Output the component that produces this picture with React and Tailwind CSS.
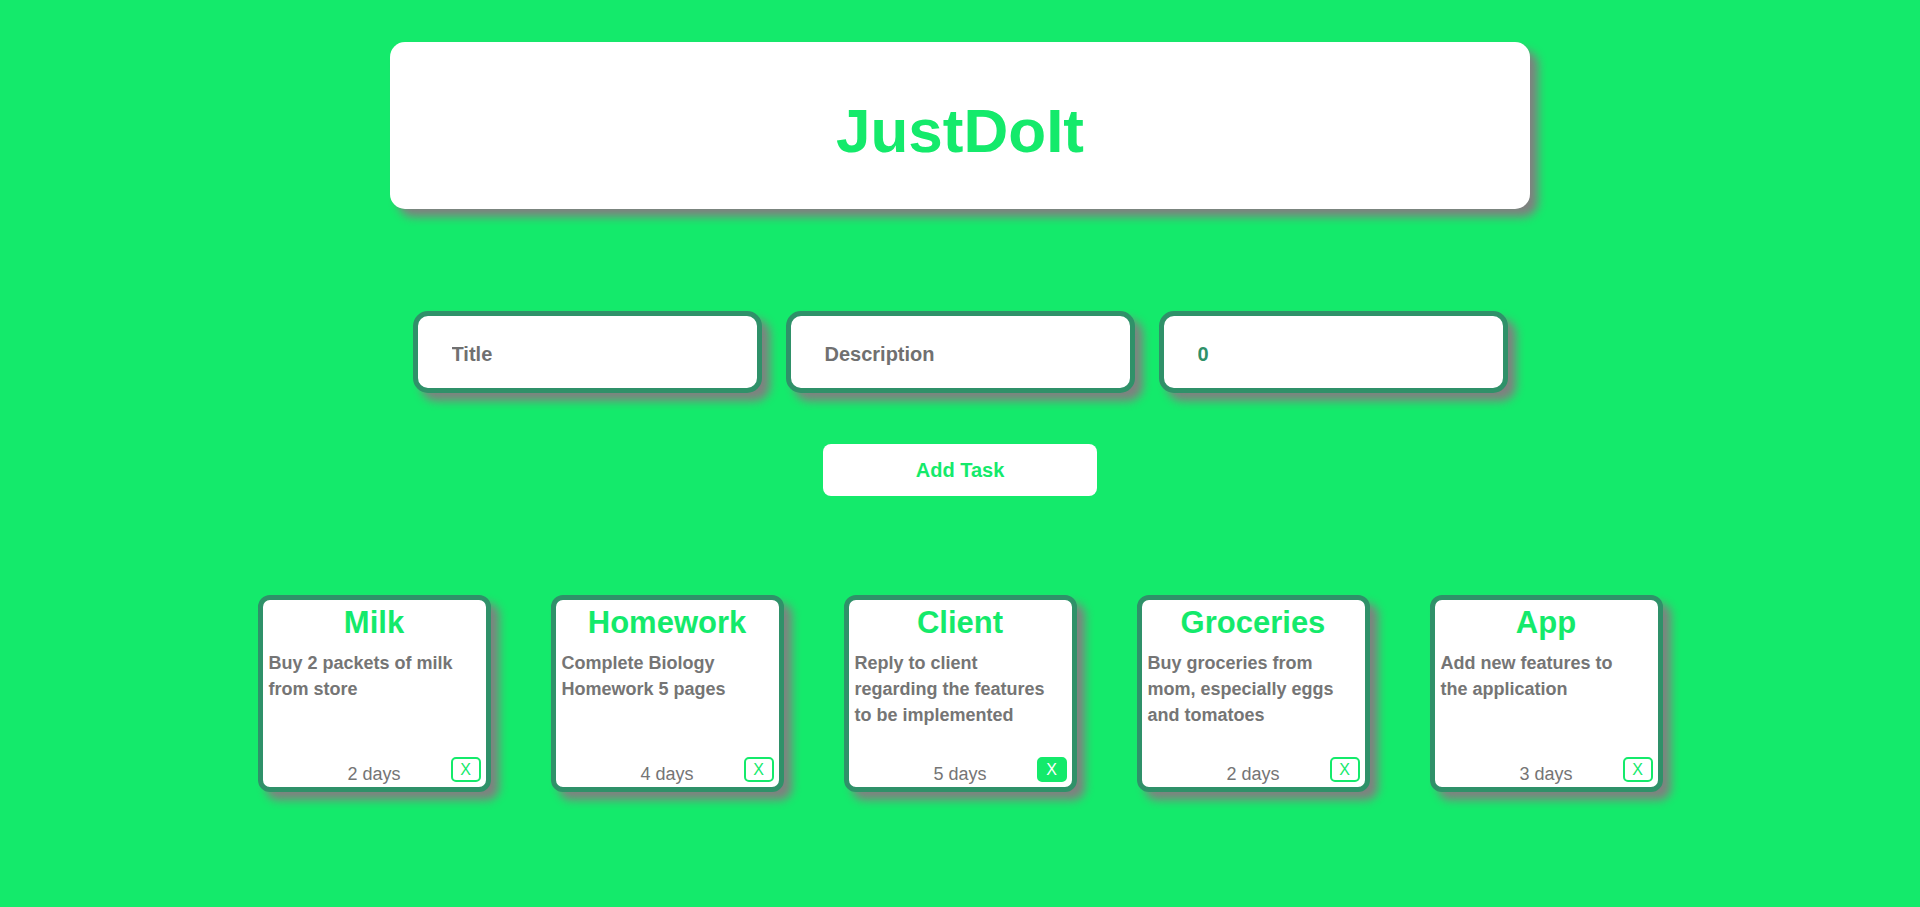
const tasks = [
  { title: "Milk", desc: "Buy 2 packets of milk from store", days: 2 },
  { title: "Homework", desc: "Complete Biology Homework 5 pages", days: 4 },
  { title: "Client", desc: "Reply to client regarding the features to be implemented", days: 5, hover: true },
  { title: "Groceries", desc: "Buy groceries from mom, especially eggs and tomatoes", days: 2 },
  { title: "App", desc: "Add new features to the application", days: 3 },
];

function TaskCard({ task }) {
  return (
    <div className="w-[233px] h-[197px] flex flex-col rounded-[12px] border-[5px] border-[#2f9169] bg-white shadow-[8px_8px_10px_#808080]">
      <h2 className="text-center text-[31px] leading-[46px] font-bold text-[#14ea6b]">{task.title}</h2>
      <p className="mt-[4px] flex-1 pl-[6px] pr-[19px] text-[18px] leading-[26px] font-bold text-[#757575]">{task.desc}</p>
      <div className="relative h-[24px] text-center text-[18px] leading-[22px] text-[#757575]">
        {task.days} days
        <button
          className={
            task.hover
              ? "absolute right-[5px] bottom-[5px] w-[30px] h-[25px] rounded-[5px] border-2 border-[#14ea6b] bg-[#14ea6b] text-[16px] leading-[20px] text-white"
              : "absolute right-[5px] bottom-[5px] w-[30px] h-[25px] rounded-[5px] border-2 border-[#14ea6b] bg-white text-[16px] leading-[20px] text-[#14ea6b]"
          }
        >
          X
        </button>
      </div>
    </div>
  );
}

export default function App() {
  return (
    <div className="min-h-screen bg-[#14ea6b] pt-[42px] font-['Comic_Sans_MS','Liberation_Sans',sans-serif]">
      <header className="mx-auto flex h-[167px] w-[1140px] items-center justify-center rounded-[15px] bg-white pt-[10px] shadow-[8px_8px_10px_#808080]">
        <h1 className="text-[62px] font-bold text-[#14ea6b]">JustDoIt</h1>
      </header>

      <div className="mt-[102px] flex justify-center gap-[24px]">
        <input
          type="text"
          placeholder="Title"
          className="h-[82px] w-[349px] rounded-[15px] border-[5px] border-[#2f9169] bg-white pl-[34px] pt-[4px] text-[20px] font-bold text-[#2f9169] shadow-[8px_8px_10px_#808080] outline-none placeholder:text-[#707070]"
        />
        <input
          type="text"
          placeholder="Description"
          className="h-[82px] w-[349px] rounded-[15px] border-[5px] border-[#2f9169] bg-white pl-[34px] pt-[4px] text-[20px] font-bold text-[#2f9169] shadow-[8px_8px_10px_#808080] outline-none placeholder:text-[#707070]"
        />
        <input
          type="number"
          defaultValue={0}
          className="h-[82px] w-[349px] rounded-[15px] border-[5px] border-[#2f9169] bg-white pl-[34px] pt-[4px] text-[20px] font-bold text-[#2f9169] shadow-[8px_8px_10px_#808080] outline-none"
        />
      </div>

      <div className="mt-[51px] flex justify-center">
        <button className="h-[52px] w-[274px] rounded-[8px] bg-white text-[20px] font-bold text-[#14ea6b]">Add Task</button>
      </div>

      <div className="mt-[99px] flex justify-center gap-[60px]">
        {tasks.map((t) => (
          <TaskCard key={t.title} task={t} />
        ))}
      </div>
    </div>
  );
}
